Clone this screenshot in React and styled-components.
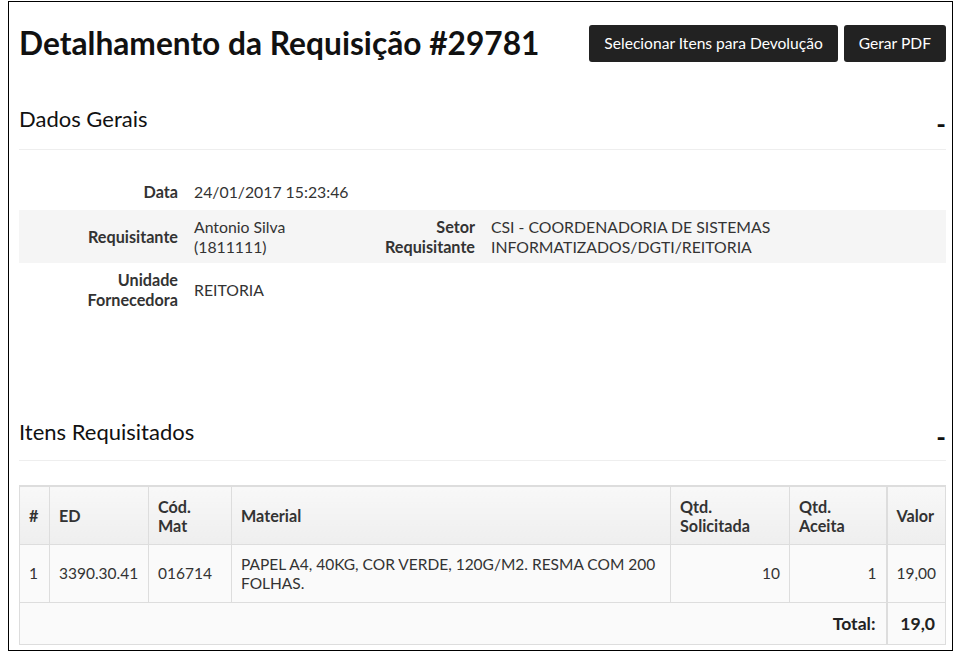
import React from "react";
import styled, { createGlobalStyle } from "styled-components";

const GlobalStyle = createGlobalStyle`
  * {
    box-sizing: border-box;
  }
  body {
    margin: 1px 2px 5px 8px;
    font-family: Lato, "Open Sans", sans-serif;
    font-size: 15.6px;
    color: #333;
    background: #fff;
  }
`;

const Frame = styled.div`
  height: 650px;
  border: 1px solid #000;
  padding: 22px 6px 0 10px;
  overflow: hidden;
`;

const PageHeader = styled.div`
  display: flex;
  justify-content: space-between;
  align-items: center;
  height: 38px;
`;

const Title = styled.h1`
  margin: 0;
  font-size: 31.7px;
  font-weight: 700;
  line-height: 38px;
  color: #111;
`;

const Actions = styled.div`
  display: flex;
  gap: 6px;
`;

const DarkButton = styled.button`
  height: 37px;
  padding: 8px 15px;
  border: none;
  border-radius: 3px;
  background: #222;
  color: #fff;
  font-family: inherit;
  font-size: 15.6px;
  line-height: 21px;
  cursor: pointer;
`;

const Section = styled.section`
  margin-top: ${(p) => p.$gap}px;
`;

const SectionHead = styled.div`
  display: flex;
  justify-content: space-between;
  align-items: flex-start;
  padding-bottom: ${(p) => p.$pad || 15}px;
  border-bottom: 1px solid #eee;
`;

const SectionTitle = styled.h2`
  margin: 0;
  font-size: 22px;
  font-weight: 400;
  line-height: 30px;
  color: #111;
`;

const Collapse = styled.span`
  font-size: 26px;
  font-weight: 700;
  line-height: 30px;
  color: #111;
  transform: translateY(5px);
  cursor: pointer;
`;

const InfoGrid = styled.div`
  margin-top: 23px;
`;

const InfoRow = styled.div`
  display: grid;
  grid-template-columns: 167px 160px 137px 1fr;
  align-items: center;
  min-height: 37px;
  background: ${(p) => (p.$striped ? "#f5f5f5" : "transparent")};
`;

const Label = styled.div`
  padding: 6.5px 8px;
  text-align: right;
  font-size: 16.2px;
  font-weight: 700;
  line-height: 20px;
`;

const Value = styled.div`
  grid-column: ${(p) => (p.$wide ? "2 / 5" : "auto")};
  padding: 6.5px 8px;
  font-size: 15.8px;
  line-height: 20px;
`;

const ItemsTable = styled.table`
  width: 100%;
  margin-top: 24px;
  border-collapse: collapse;
  table-layout: fixed;
  border: 1px solid #ddd;
  border-top-width: 2px;
`;

const HeadCell = styled.th`
  width: ${(p) => p.$w}px;
  padding: 9.5px 9px;
  border: 1px solid #ddd;
  border-left-width: ${(p) => (p.$thick ? 2 : 1)}px;
  background: linear-gradient(#f8f8f8, #eeeeee);
  text-align: left;
  vertical-align: middle;
  font-size: 16.2px;
  font-weight: 700;
  line-height: 19px;
  color: #333;
`;

const Cell = styled.td`
  padding: 9.5px 9px;
  border: 1px solid #ddd;
  border-left-width: ${(p) => (p.$thick ? 2 : 1)}px;
  background: #fafafa;
  text-align: ${(p) => p.$align || "left"};
  vertical-align: middle;
  font-size: 15.5px;
  line-height: 19px;
`;

const FootCell = styled(Cell)`
  padding-right: 10px;
  font-size: 17.6px;
  font-weight: 700;
  line-height: 22px;
  color: #222;
`;

const columns = [
  { key: "n", label: "#", w: 30 },
  { key: "ed", label: "ED", w: 99 },
  { key: "cod", label: ["Cód.", "Mat"], w: 83 },
  { key: "mat", label: "Material", w: 439 },
  { key: "sol", label: ["Qtd.", "Solicitada"], w: 119 },
  { key: "ace", label: ["Qtd.", "Aceita"], w: 97 },
  { key: "val", label: "Valor", w: 59, thick: true },
];

const items = [
  {
    n: "1",
    ed: "3390.30.41",
    cod: "016714",
    mat: "PAPEL A4, 40KG, COR VERDE, 120G/M2. RESMA COM 200 FOLHAS.",
    sol: "10",
    ace: "1",
    val: "19,00",
  },
];

function App() {
  return (
    <>
      <GlobalStyle />
      <Frame>
        <PageHeader>
          <Title>Detalhamento da Requisição #29781</Title>
          <Actions>
            <DarkButton>Selecionar Itens para Devolução</DarkButton>
            <DarkButton>Gerar PDF</DarkButton>
          </Actions>
        </PageHeader>

        <Section $gap={42}>
          <SectionHead>
            <SectionTitle>Dados Gerais</SectionTitle>
            <Collapse>-</Collapse>
          </SectionHead>
          <InfoGrid>
            <InfoRow>
              <Label>Data</Label>
              <Value $wide>24/01/2017 15:23:46</Value>
            </InfoRow>
            <InfoRow $striped>
              <Label>Requisitante</Label>
              <Value>Antonio Silva (1811111)</Value>
              <Label>Setor Requisitante</Label>
              <Value>CSI - COORDENADORIA DE SISTEMAS INFORMATIZADOS/DGTI/REITORIA</Value>
            </InfoRow>
            <InfoRow>
              <Label>
                Unidade
                <br />
                Fornecedora
              </Label>
              <Value $wide>REITORIA</Value>
            </InfoRow>
          </InfoGrid>
        </Section>

        <Section $gap={101}>
          <SectionHead $pad={13}>
            <SectionTitle>Itens Requisitados</SectionTitle>
            <Collapse>-</Collapse>
          </SectionHead>
          <ItemsTable>
            <thead>
              <tr>
                {columns.map((c) => (
                  <HeadCell key={c.key} $w={c.w} $thick={c.thick}>
                    {Array.isArray(c.label) ? (
                      <>
                        {c.label[0]}
                        <br />
                        {c.label[1]}
                      </>
                    ) : (
                      c.label
                    )}
                  </HeadCell>
                ))}
              </tr>
            </thead>
            <tbody>
              {items.map((it) => (
                <tr key={it.n}>
                  <Cell>{it.n}</Cell>
                  <Cell>{it.ed}</Cell>
                  <Cell>{it.cod}</Cell>
                  <Cell>{it.mat}</Cell>
                  <Cell $align="right">{it.sol}</Cell>
                  <Cell $align="right">{it.ace}</Cell>
                  <Cell $thick>{it.val}</Cell>
                </tr>
              ))}
            </tbody>
            <tfoot>
              <tr>
                <FootCell colSpan={6} $align="right">
                  Total:
                </FootCell>
                <FootCell $thick $align="right">
                  19,0
                </FootCell>
              </tr>
            </tfoot>
          </ItemsTable>
        </Section>
      </Frame>
    </>
  );
}

export default App;
